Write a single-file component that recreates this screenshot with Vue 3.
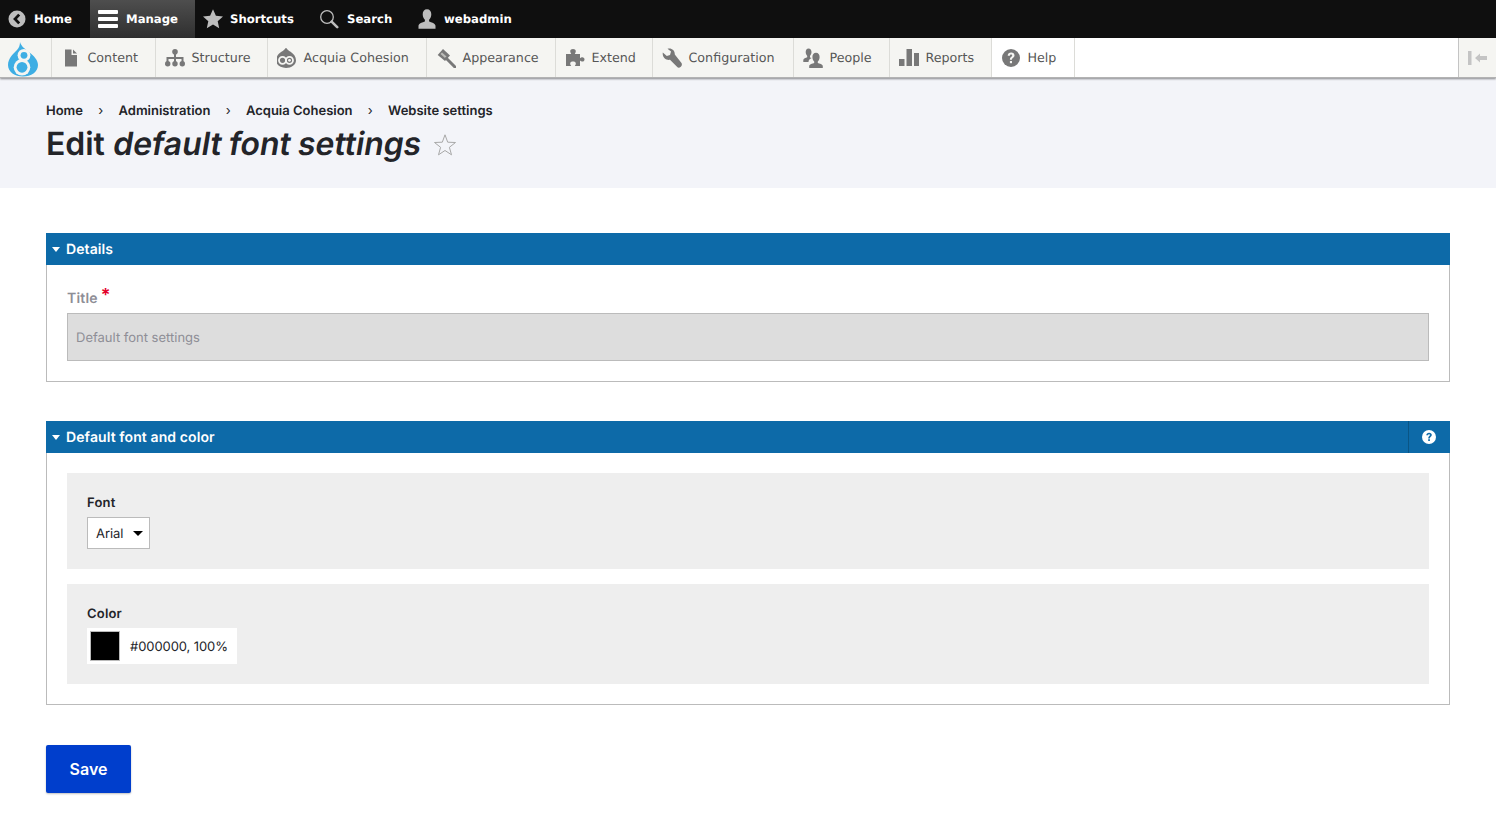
<script setup>
const top = [
  { label: 'Home', icon: 'back', cls: 't-home' },
  { label: 'Manage', icon: 'menu', cls: 't-manage' },
  { label: 'Shortcuts', icon: 'star', cls: 't-short' },
  { label: 'Search', icon: 'search', cls: 't-search' },
  { label: 'webadmin', icon: 'user', cls: 't-user' }
]
const tray = [
  { label: 'Content', icon: 'content' },
  { label: 'Structure', icon: 'structure' },
  { label: 'Acquia Cohesion', icon: 'acquia' },
  { label: 'Appearance', icon: 'appearance' },
  { label: 'Extend', icon: 'extend' },
  { label: 'Configuration', icon: 'config' },
  { label: 'People', icon: 'people' },
  { label: 'Reports', icon: 'reports' },
  { label: 'Help', icon: 'help', active: true }
]
const crumbs = ['Home', 'Administration', 'Acquia Cohesion', 'Website settings']
</script>

<template>
  <div class="page">
    <nav class="topbar">
      <a v-for="t in top" :key="t.label" class="top-item" :class="t.cls">
        <svg class="top-icon" viewBox="0 0 20 20" width="20" height="20" aria-hidden="true">
          <template v-if="t.icon === 'back'">
            <circle cx="9" cy="10" r="8.500" fill="#bdbdbd" />
            <path d="M11.200 5.600 7 10l4.200 4.400" fill="none" stroke="#0f0f0f" stroke-width="2.800" />
          </template>
          <template v-else-if="t.icon === 'menu'">
            <rect x="0" y="1" width="20" height="4" rx="1" fill="#fff" />
            <rect x="0" y="8" width="20" height="4" rx="1" fill="#fff" />
            <rect x="0" y="15" width="20" height="4" rx="1" fill="#fff" />
          </template>
          <path v-else-if="t.icon === 'star'" d="M10 .3l2.900 6.500 7.100.7-5.300 4.700 1.500 7L10 15.600l-6.200 3.600 1.500-7L0 7.500l7.100-.7z" fill="#bdbdbd" />
          <template v-else-if="t.icon === 'search'">
            <circle cx="8" cy="8" r="6.300" fill="none" stroke="#bdbdbd" stroke-width="1.300" />
            <path d="M12.600 12.600l5.600 5.600" stroke="#bdbdbd" stroke-width="2.600" stroke-linecap="round" />
          </template>
          <path v-else d="M10 .3c2.800 0 4.300 2.100 4.300 5 0 2.500-1 4.400-2.200 5.500v1.700c2 1 6.400 1.700 6.400 4.300v3H1.500v-3c0-2.600 4.400-3.300 6.400-4.300v-1.700C6.700 9.700 5.700 7.800 5.700 5.300c0-2.900 1.500-5 4.300-5z" fill="#bdbdbd" />
        </svg>
        <span>{{ t.label }}</span>
      </a>
    </nav>

    <nav class="tray">
      <a class="logo">
        <svg viewBox="0 0 30 35" width="30" height="35" aria-hidden="true">
          <path d="M12 0C13 4 17 7 21 10C26 14 30 18 30 23C30 30 23 34.500 15 34.500C7 34.500 0 30 0 23C0 16 6 11 9 8C11 6 12 3 12 0z" fill="#3eaee4" />
          <circle cx="16" cy="13.300" r="6.400" fill="#f5f5f2" />
          <circle cx="16" cy="13.300" r="3.400" fill="#3eaee4" />
          <circle cx="14" cy="25.300" r="8.300" fill="#f5f5f2" />
          <circle cx="14" cy="25.300" r="5.400" fill="#3eaee4" />
        </svg>
      </a>
      <a v-for="it in tray" :key="it.label" class="tray-item" :class="{ active: it.active }">
        <svg class="tray-icon" viewBox="0 0 20 20" width="20" height="20" aria-hidden="true">
          <path v-if="it.icon === 'content'" d="M4 1.500h6.500v5.500H16v11.500H4zM12 1.500l4 4h-4z" fill="#787878" />
          <template v-else-if="it.icon === 'structure'">
            <circle cx="10" cy="3.800" r="2.800" fill="#787878" />
            <path d="M9 5h2v4h7.500v5h-2v-3H11v3H9v-3H3.500v3h-2V9H9z" fill="#787878" />
            <circle cx="2.700" cy="15.800" r="2.700" fill="#787878" />
            <circle cx="10" cy="15.800" r="2.700" fill="#787878" />
            <circle cx="17.300" cy="15.800" r="2.700" fill="#787878" />
          </template>
          <g v-else-if="it.icon === 'acquia'" transform="translate(-1 0)">
            <path d="M10 -.5c.8 1.800 2.500 2.900 4.600 4.300C17.500 5.800 20 8.600 20 12.300c0 4.700-4.500 7.700-10 7.700S0 17 0 12.300C0 8.600 2.500 5.800 5.400 3.800 7.500 2.400 9.200 1.300 10-.5z" fill="#787878" />
            <circle cx="6.500" cy="12.300" r="3.500" fill="none" stroke="#f5f5f2" stroke-width="1.800" />
            <circle cx="13.500" cy="12.300" r="3.500" fill="none" stroke="#f5f5f2" stroke-width="1.800" />
            <circle cx="13.500" cy="12.300" r="1.400" fill="#f5f5f2" />
          </g>
          <template v-else-if="it.icon === 'appearance'">
            <path d="M7 1l7 6.500L9 13 1.700 7z" fill="#787878" />
            <path d="M6 4.500l4.500 4-1.500 1.500-4.500-4z" fill="#bcbcb8" />
            <path d="M10.500 10.500l8.500 8.500" stroke="#787878" stroke-width="3" stroke-linecap="round" />
          </template>
          <path v-else-if="it.icon === 'extend'" d="M1 6h5.200C5.600 5 5.200 4.300 5.200 3.300 5.200 1.800 6.500 1 8 1s2.800.8 2.800 2.300c0 1-.4 1.700-1 2.700H15v4.200c1-.7 1.500-1 2.300-1 1.400 0 2.200 1 2.200 2.200s-.8 2.200-2.200 2.200c-.8 0-1.300-.3-2.300-1V18H9.800c.6-1 1-1.500 1-2.500 0-1.500-1.300-2-2.800-2s-2.800.5-2.800 2c0 1 .4 1.500 1 2.500H1z" fill="#787878" />
          <path v-else-if="it.icon === 'config'" d="M.8 4.500L4.800 8 8 7 9 3.500 5.500.8C9-.5 13 2 12.800 6.500L19.300 14.800C20.300 16 20 17.500 18.800 18.800 17.500 20 16 20 15 18.800L8 11.800C4 12.500 0 9.500.8 4.500z" fill="#787878" />
          <template v-else-if="it.icon === 'people'">
            <path d="M5.500 .5c1.900 0 3 1.500 3 3.600 0 1.700-.7 3-1.500 3.800v1.500l1.600.7c-1.700.8-3.100 1.900-3.100 4H.3V12c0-1.600 2.500-2 3.900-2.700V7.900C3.400 7.100 2.700 5.800 2.700 4.100c0-2.100 1-3.600 2.800-3.600z" fill="#787878" />
            <path d="M13 4.800c2.300 0 3.600 1.800 3.600 4.200 0 2.100-.8 3.600-1.800 4.500v1.500c1.600.8 5 1.100 5 3.100V20H6.200v-2c0-2 3.400-2.300 5-3.100v-1.500c-1-.9-1.800-2.400-1.800-4.500 0-2.400 1.300-4.200 3.600-4.200z" fill="#787878" />
          </template>
          <template v-else-if="it.icon === 'reports'">
            <rect x="0" y="11" width="5.500" height="7" fill="#787878" />
            <rect x="7.500" y="1" width="5.500" height="17" fill="#787878" />
            <rect x="15" y="5" width="5.500" height="13" fill="#787878" />
          </template>
          <template v-else>
            <circle cx="10" cy="10" r="9" fill="#787878" />
            <path d="M6.700 7.800c0-2 1.500-3.200 3.500-3.200s3.300 1.100 3.300 2.900c0 2.300-2.600 2.400-2.600 4.200H8.900c0-2.900 2.300-2.900 2.300-4.200 0-.7-.4-1.100-1.100-1.100-.8 0-1.200.5-1.200 1.400z" fill="#f5f5f2" />
            <rect x="8.900" y="13" width="2.100" height="2.200" fill="#f5f5f2" />
          </template>
        </svg>
        <span>{{ it.label }}</span>
      </a>
      <div class="tray-fill"></div>
      <a class="tray-toggle">
        <svg viewBox="0 0 20 16" width="20" height="16" aria-hidden="true">
          <rect x="0" y="1" width="3.500" height="14" fill="#c4c4c4" />
          <path d="M7 8l5-4.500V6h7v4h-7v2.500z" fill="#c4c4c4" />
        </svg>
      </a>
    </nav>

    <header class="page-head">
      <ol class="crumbs">
        <li v-for="(c, i) in crumbs" :key="c" class="crumb">
          <span v-if="i > 0" class="sep">›</span>
          <a>{{ c }}</a>
        </li>
      </ol>
      <div class="title-row">
        <h1>Edit <em class="slant">default font settings</em></h1>
        <svg class="fav" viewBox="0 0 24 24" width="24" height="24" aria-hidden="true">
          <path d="M12 1.800l2.700 7.400 7.800.3-6.100 4.800 2.100 7.500-6.500-4.300-6.500 4.300 2.100-7.500-6.100-4.800 7.800-.3z" fill="none" stroke="#a8a8a8" stroke-width="1" />
        </svg>
      </div>
    </header>

    <main class="content">
      <section class="group g-details">
        <div class="group-head">
          <span class="caret"></span>
          <span class="group-title">Details</span>
        </div>
        <div class="group-body">
          <label class="title-label">Title<span class="req">*</span></label>
          <div class="title-input"><span>Default font settings</span></div>
        </div>
      </section>

      <section class="group g-font">
        <div class="group-head">
          <span class="caret"></span>
          <span class="group-title">Default font and color</span>
          <span class="help-btn">
            <svg viewBox="0 0 14 14" width="14" height="14" aria-hidden="true">
              <circle cx="7" cy="7" r="7" fill="#fff" />
              <path d="M4.300 5.300C4.300 3.700 5.500 2.800 7.100 2.800s2.700.9 2.700 2.300c0 1.900-2 1.900-2 3.300H6.200c0-2.300 1.800-2.300 1.800-3.300 0-.5-.3-.9-.9-.9-.6 0-1 .4-1 1.100z" fill="#0d6aa8" />
              <rect x="6.200" y="9.200" width="1.700" height="1.800" fill="#0d6aa8" />
            </svg>
          </span>
        </div>
        <div class="group-body panels">
          <div class="panel p-font">
            <div class="panel-label">Font</div>
            <div class="select">
              <span class="nudge">Arial</span>
              <span class="select-caret"></span>
            </div>
          </div>
          <div class="panel p-color">
            <div class="panel-label">Color</div>
            <div class="color">
              <span class="swatch"></span>
              <span class="nudge">#000000, 100%</span>
            </div>
          </div>
        </div>
      </section>

      <button class="save" type="button">Save</button>
    </main>
  </div>
</template>

<style scoped>
.page {
  font-family: Inter, "Liberation Sans", sans-serif;
  color: #232429;
  min-height: 827px;
  background: #fff;
  text-rendering: geometricPrecision;
}
.topbar {
  height: 38px;
  background: #0f0f0f;
  display: flex;
  align-items: stretch;
  font-family: "DejaVu Sans", sans-serif;
  font-size: 11.7px;
  font-weight: 700;
  color: #fff;
}
.top-item {
  display: flex;
  align-items: center;
  box-sizing: border-box;
  gap: 8px;
  padding-bottom: 1px;
}
.t-home { width: 90px; padding-left: 8px; gap: 6px; }
.t-manage {
  width: 105px;
  padding-left: 8px;
  gap: 8px;
  padding-bottom: 0;
  background: linear-gradient(to bottom, #4e4e4e, #2f2f2f);
}
.t-short { width: 115px; padding-left: 8px; gap: 7px; }
.t-search { width: 99px; padding-left: 9px; gap: 8px; }
.t-user { padding-left: 8px; gap: 7px; }
.tray {
  height: 39px;
  background: #f5f5f2;
  display: grid;
  grid-template-columns: 52px 104px 112px 159px 129px 97px 141px 96px 102px 83px 1fr 37px;
  box-shadow: 0 1px 2px rgba(0, 0, 0, .45);
  border-bottom: 1px solid #b3b3b3;
  position: relative;
  font-family: "DejaVu Sans", sans-serif;
  font-size: 12.7px;
  color: #565656;
}
.logo {
  display: flex;
  align-items: flex-start;
  padding: 4px 0 0 8px;
  border-right: 1px solid #dcdcd8;
  box-sizing: border-box;
}
.tray-item {
  display: flex;
  align-items: center;
  box-sizing: border-box;
  border-right: 1px solid #dcdcd8;
  padding-left: 9px;
  gap: 6.500px;
  white-space: nowrap;
}
.tray-item.active { background: #fff; }
.tray-fill {
  background: #fff;
  border-right: 1px solid #c4c4c4;
}
.tray-toggle {
  display: flex;
  align-items: center;
  padding-left: 9px;
}
.page-head {
  background: #f3f4f9;
  height: 110px;
  box-sizing: border-box;
  padding: 25px 46px 0;
}
.crumbs {
  list-style: none;
  display: flex;
  margin: 0;
  padding: 0;
  font-size: 13px;
  font-weight: 600;
  line-height: 16px;
}
.crumb { display: flex; }
.sep {
  width: 35.500px;
  text-align: center;
  font-weight: 400;
}
.title-row {
  display: flex;
  align-items: center;
  gap: 13px;
  margin-top: 5px;
}
h1 {
  margin: 0;
  font-size: 32px;
  font-weight: 600;
  letter-spacing: -.08px;
  word-spacing: -.6px;
  line-height: 40px;
  color: #232429;
}
.slant {
  display: inline-block;
  font-style: normal;
  transform: skewX(-9.400deg);
  transform-origin: 0 75%;
}
.fav { margin-top: 2px; }
.content { padding: 45px 46px 0; }
.group {
  border: 1px solid #bbb;
  border-top: 0;
  box-sizing: border-box;
}
.g-details { height: 149px; margin-bottom: 39px; }
.g-font { height: 284px; margin-bottom: 40px; }
.group-head {
  height: 32px;
  box-sizing: border-box;
  background: #0d6aa8;
  color: #fff;
  display: flex;
  align-items: center;
  font-size: 14px;
  font-weight: 600;
  letter-spacing: .1px;
  margin: 0 -1px;
}
.caret {
  width: 0;
  height: 0;
  border-left: 4px solid transparent;
  border-right: 4px solid transparent;
  border-top: 5px solid #fff;
  margin: 0 6px;
}
.group-title { flex: 1; }
.help-btn {
  width: 42px;
  height: 32px;
  padding-right: 1px;
  border-left: 1px solid #0a5585;
  display: flex;
  align-items: center;
  justify-content: center;
  box-sizing: border-box;
}
.group-body { padding: 20px; }
.title-label {
  display: block;
  font-size: 14px;
  font-weight: 600;
  letter-spacing: .2px;
  color: #8e8e96;
  line-height: 17px;
  margin-top: 5px;
}
.req {
  color: #e4002b;
  margin-left: 3px;
  font-size: 18px;
  line-height: 10px;
  position: relative;
  top: -2px;
}
.title-input {
  margin-top: 6px;
  height: 48px;
  box-sizing: border-box;
  background: #ddd;
  border: 1px solid #bbb;
  display: flex;
  align-items: center;
  padding: 2px 0 0 8px;
  font-size: 13px;
  color: #8e8e96;
}
.panels {
  display: flex;
  flex-direction: column;
  gap: 15px;
}
.panel {
  background: #eee;
  box-sizing: border-box;
  padding: 21px 20px 20px;
}
.p-font { height: 96px; }
.p-color { height: 100px; }
.panel-label {
  font-size: 13px;
  font-weight: 600;
  letter-spacing: .2px;
  line-height: 18px;
}
.select {
  margin-top: 5px;
  width: 63px;
  height: 32px;
  box-sizing: border-box;
  background: #fff;
  border: 1px solid #bbb;
  display: flex;
  align-items: center;
  justify-content: space-between;
  padding: 0 6px 0 8px;
  font-size: 13px;
}
.select-caret {
  width: 0;
  height: 0;
  border-left: 5px solid transparent;
  border-right: 5px solid transparent;
  border-top: 5px solid #000;
}
.nudge {
  padding-top: 2px;
  letter-spacing: -.08px;
}
.color {
  margin-top: 5px;
  width: 150px;
  height: 36px;
  background: #fff;
  display: flex;
  align-items: center;
  font-size: 13px;
  padding-left: 3px;
  box-sizing: border-box;
  gap: 10px;
}
.swatch {
  width: 30px;
  height: 30px;
  box-sizing: border-box;
  background: #000;
  border: 1px solid #bbb;
}
.save {
  display: block;
  width: 85px;
  height: 48px;
  border: 0;
  border-radius: 2px;
  background: #003ecc;
  color: #fff;
  font-family: inherit;
  font-size: 16px;
  font-weight: 600;
  box-shadow: 0 1px 2px rgba(0, 0, 0, .25);
}
</style>

<style>
html, body { margin: 0; background: #fff; }
</style>
